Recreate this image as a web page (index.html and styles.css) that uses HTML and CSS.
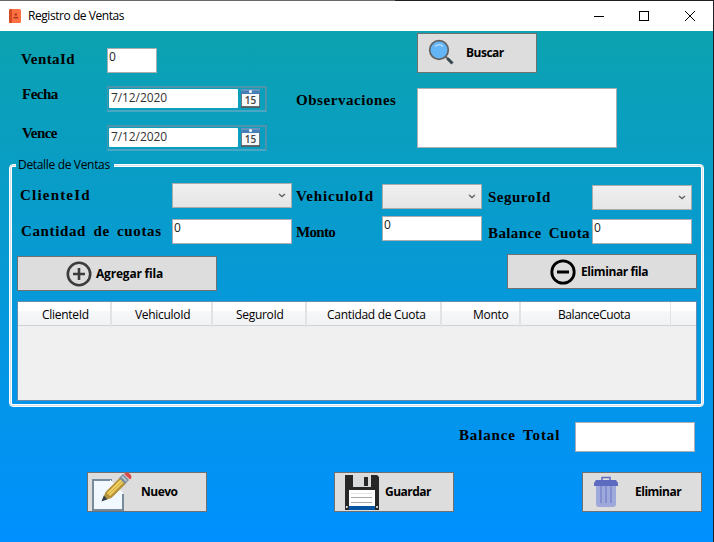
FILE: index.html
```html
<!DOCTYPE html>
<html lang="es">
<head>
<meta charset="utf-8">
<title>Registro de Ventas</title>
<link rel="stylesheet" href="styles.css">
</head>
<body>
<div class="window">
  <header class="titlebar">
    <svg class="app-icon" width="13" height="15" viewBox="0 0 13 15"><rect width="12" height="14" rx="1.5" fill="#ff7043"/><path d="M1.5 0H3v14H1.500Q0 14 0 12.500V1.500Q0 0 1.500 0z" fill="#d84a24"/><circle cx="6.800" cy="5.500" r="1.300" fill="#a9391d"/><path d="M4.300 9.500V8.700Q4.300 7.700 6.800 7.700T9.300 8.700v.8z" fill="#a9391d"/></svg>
    <span class="title">Registro de Ventas</span>
    <svg class="controls" width="104" height="12" viewBox="0 0 104 12" fill="none" stroke="#000" stroke-width="1"><path d="M0 6.500h10"/><rect x="45.500" y="1.500" width="9" height="9"/><path d="M91 1l10 10M101 1L91 11"/></svg>
  </header>

  <main>
    <section class="top">
      <div class="sale">
        <label class="lbl venta">VentaId</label><div class="input">0</div>
        <label class="lbl fecha">Fecha</label>
        <div class="date"><span>7/12/2020</span><svg width="19" height="19" viewBox="0 0 19 19"><rect x=".5" y=".5" width="18" height="17.500" fill="#f7f8f9" stroke="#6e7881"/><rect x="0" y="0" width="19" height="5" fill="#467eb5"/><path d="M0 1h19" stroke="#83a8c9"/><circle cx="9.500" cy="2.500" r="1.500" fill="#fff"/><path d="M0 18h19" stroke="#515253" stroke-width="1.500"/><text class="day" x="9.500" y="15.300" text-anchor="middle">15</text></svg></div>
        <label class="lbl vence">Vence</label>
        <div class="date"><span>7/12/2020</span><svg width="19" height="19" viewBox="0 0 19 19"><rect x=".5" y=".5" width="18" height="17.500" fill="#f7f8f9" stroke="#6e7881"/><rect x="0" y="0" width="19" height="5" fill="#467eb5"/><path d="M0 1h19" stroke="#83a8c9"/><circle cx="9.500" cy="2.500" r="1.500" fill="#fff"/><path d="M0 18h19" stroke="#515253" stroke-width="1.500"/><text class="day" x="9.500" y="15.300" text-anchor="middle">15</text></svg></div>
      </div>
      <label class="lbl obs">Observaciones</label>
      <div class="search">
        <div class="btn buscar">
          <svg width="28" height="28" viewBox="0 0 28 28"><path d="M17 17l3.500 3.500" stroke="#616161" stroke-width="2"/><path d="M19.500 19.500l5 5" stroke="#37474f" stroke-width="3"/><circle cx="11" cy="11" r="9.300" fill="#64b5f6" stroke="#616161" stroke-width="1.700"/><path d="M7 7.500Q11 3.800 15 7.500" fill="none" stroke="#bbdefb" stroke-width="1.300"/></svg>
          <span>Buscar</span>
        </div>
        <div class="input notes"></div>
      </div>
    </section>

    <section class="group">
      <h2 class="legend">Detalle de Ventas</h2>
      <div class="fields">
        <label class="lbl cliente">ClienteId</label>
        <div class="combo c1"><svg width="8" height="5" viewBox="0 0 8 5"><path d="M1 1l3 2.600L7 1" fill="none" stroke="#606060" stroke-width="1.300"/></svg></div>
        <label class="lbl vehiculo">VehiculoId</label>
        <div class="combo c2"><svg width="8" height="5" viewBox="0 0 8 5"><path d="M1 1l3 2.600L7 1" fill="none" stroke="#606060" stroke-width="1.300"/></svg></div>
        <label class="lbl seguro">SeguroId</label>
        <div class="combo c3"><svg width="8" height="5" viewBox="0 0 8 5"><path d="M1 1l3 2.600L7 1" fill="none" stroke="#606060" stroke-width="1.300"/></svg></div>
        <label class="lbl cuotas">Cantidad de cuotas</label><div class="input low">0</div>
        <label class="lbl monto">Monto</label><div class="input">0</div>
        <label class="lbl cuota">Balance Cuota</label><div class="input low">0</div>
      </div>
      <div class="row-actions">
        <div class="btn agregar">
          <svg width="26" height="26" viewBox="0 0 26 26" fill="none" stroke="#3c3c3c"><circle cx="13" cy="13" r="11.200" stroke-width="2.600"/><path d="M13 7v12M7 13h12" stroke-width="2.600"/></svg>
          <span>Agregar fila</span>
        </div>
        <div class="btn quitar">
          <svg width="26" height="26" viewBox="0 0 26 26" fill="none" stroke="#000"><circle cx="13" cy="13" r="11.200" stroke-width="2.800"/><path d="M7 13h12" stroke-width="3"/></svg>
          <span>Eliminar fila</span>
        </div>
      </div>
      <div class="grid">
        <div class="head"><span>ClienteId</span><span>VehiculoId</span><span>SeguroId</span><span>Cantidad de Cuota</span><span>Monto</span><span>BalanceCuota</span><span></span></div>
      </div>
    </section>

    <section class="total"><label class="lbl balance">Balance Total</label><div class="input"></div></section>

    <footer class="actions">
      <div class="btn nuevo">
        <svg width="42" height="42" viewBox="0 0 42 42"><path d="M20 9H3v30h30V22L20 9z" fill="#f1f8ff"/><path d="M22 9H3v30h30V23" fill="none" stroke="#788b9c" stroke-width="2"/><path d="M20 9L33 22" stroke="#f1f8ff" stroke-width="1"/><path d="M12 30l3.500-9L30 6.500l6 6L21.500 27z" fill="#b6913b"/><path d="M17 22L31.500 7.500l3 3L20 25z" fill="#f2d35f"/><path d="M18.500 23.500l14.500-14" stroke="#c7a043" stroke-width="1"/><path d="M11.500 30.500l2.300-6 3.700 3.700z" fill="#36404d"/><path d="M29 7l4-4 6 6-4 4z" fill="#788b9c"/><path d="M32 5.500l4.500 4.500" stroke="#b6c4d0" stroke-width="2"/><path d="M34 3q3-3 6 0t0 5.500z" fill="#d94b4b"/></svg>
        <span>Nuevo</span>
      </div>
      <div class="btn guardar">
        <svg width="34" height="35" viewBox="0 0 34 35"><path d="M0 0h32l2 2v33H0z" fill="#272727"/><path d="M8 0h18v12H8z" fill="#d9dadb"/><rect x="19" y="2" width="4" height="9" fill="#272727"/><path d="M4 15h26v16H4z" fill="#fff"/><path d="M4 31h26v4H4z" fill="#0755a0"/><path d="M6 22.500h21M6 27.500h21" stroke="#a8a8a8"/><path d="M6 18.500h21" stroke="#e5e5e5"/><circle cx="1.800" cy="32" r="1" fill="#fff"/><circle cx="32" cy="32" r="1" fill="#fff"/></svg>
        <span>Guardar</span>
      </div>
      <div class="btn eliminar">
        <svg width="24" height="32" viewBox="0 0 24 32"><path d="M8 4V1.500h8V4" fill="none" stroke="#5c6bc0" stroke-width="1.500"/><path d="M2 9h20v19q0 3-3 3H5q-3 0-3-3z" fill="#9fa8da"/><path d="M2 4h20l2 3v3H0V7z" fill="#5c6bc0"/><path d="M7 10v17M12 10v17M17 10v17" stroke="#7986cb" stroke-width="1.500"/></svg>
        <span>Eliminar</span>
      </div>
    </footer>
  </main>
</div>
</body>
</html>
```
FILE: styles.css
```css
* { box-sizing: border-box; }

body {
  margin: 0;
  width: 714px;
  height: 542px;
  overflow: hidden;
  background: linear-gradient(90deg, #6b6868 395px, #202024 395px);
  font: 12px/16px "Open Sans", "Noto Sans", sans-serif;
  color: #000;
}

svg { display: block; flex: none; }

.window { width: 713px; padding-top: 1px; }

.titlebar {
  display: flex;
  align-items: center;
  height: 30px;
  padding: 0 14px 0 9px;
  background: #fff;
}
.title { margin-left: 6px; letter-spacing: -0.45px; white-space: nowrap; }
.controls { margin-left: auto; margin-right: 1px; }

main {
  height: 511px;
  background: linear-gradient(#0ca2b0, #0090ff);
}

.lbl {
  font: bold 15px/16px "Liberation Serif", serif;
  white-space: nowrap;
}

.input {
  height: 25px;
  padding: 0 1px;
  border: 1px solid #abadb3;
  background: #fff;
  color: #222;
}

.btn {
  display: flex;
  align-items: center;
  border: 1px solid #707070;
  background: #ddd;
  font-weight: bold;
  letter-spacing: -0.5px;
  white-space: nowrap;
}

/* Sale header */
.top { display: flex; height: 133px; }
.sale {
  display: grid;
  grid-template-columns: 107px 160px;
  grid-template-rows: 38px 39px 26px;
  width: 296px;
  padding-top: 17px;
}
.sale .input { width: 50px; }
.venta { padding: 3px 0 0 21px; letter-spacing: 0.4px; }
.fecha { padding: 0 0 0 22px; letter-spacing: -0.5px; }
.vence { padding: 0 0 0 22px; letter-spacing: -0.6px; }
.obs { width: 121px; padding-top: 61px; letter-spacing: 0.55px; }

.date {
  display: flex;
  justify-content: space-between;
  height: 26px;
  padding: 1px 5px 0 1px;
  border: 2px solid #4d93aa;
  border-left-width: 1px;
  border-bottom-color: #4aa6c3;
}
.date span {
  width: 129px;
  height: 19px;
  padding-left: 2px;
  border-radius: 1px;
  background: #fff;
  color: #333;
  line-height: 18px;
  letter-spacing: -0.1px;
}
.day { font: 600 10px "Open Sans", sans-serif; fill: #444; }

.search { padding-top: 2px; }
.buscar { width: 120px; height: 40px; padding-left: 10px; gap: 10px; }
.notes { width: 200px; height: 60px; margin-top: 15px; }

/* Detail group */
.group {
  width: 695px;
  height: 243px;
  margin-left: 9px;
  padding: 1px 6px 0 8px;
  border: 1px solid #fff;
  border-radius: 4px;
  box-shadow: inset 0 0 0 1px #d5dfe5, inset 0 0 0 2px #fff;
}
.legend {
  width: 98px;
  height: 16px;
  margin: -9px 0 0 -2px;
  padding-left: 2px;
  background: #099dc5;
  font-size: 12px;
  font-weight: normal;
  letter-spacing: -0.33px;
  white-space: nowrap;
}
.fields {
  display: grid;
  grid-template-columns: 154px 120px 90px 100px 110px 100px;
  grid-template-rows: 33px 28px;
  margin-top: 10px;
}
.combo {
  display: flex;
  align-items: center;
  justify-content: flex-end;
  height: 25px;
  padding-right: 5px;
  border: 1px solid #acacac;
  background: linear-gradient(#f0f0f0, #e5e5e5);
}
.c2 { margin-top: 1px; }
.c3 { margin-top: 2px; }
.low { margin-top: 3px; }
.cliente { padding: 4px 0 0 2px; letter-spacing: 1.2px; }
.vehiculo { padding: 5px 0 0 4px; letter-spacing: 0.85px; }
.seguro { padding: 6px 0 0 6px; letter-spacing: 0.5px; }
.cuotas { padding: 7px 0 0 3px; letter-spacing: 0.63px; word-spacing: 3px; }
.monto { padding: 8px 0 0 4px; letter-spacing: -0.7px; }
.cuota { padding: 9px 0 0 6px; letter-spacing: 0.4px; word-spacing: 3px; }

.row-actions {
  display: flex;
  justify-content: space-between;
  margin: 10px 0 0 -1px;
}
.row-actions .btn { height: 35px; }
.agregar { width: 200px; margin-top: 2px; padding-left: 48px; gap: 4px; letter-spacing: -0.2px; }
.quitar { width: 190px; padding-left: 42px; gap: 5px; letter-spacing: -0.4px; }

.grid {
  height: 100px;
  margin: 10px 0 0 -1px;
  border: 1px solid #688caf;
  background: #f0f0f0;
}
.head {
  display: grid;
  grid-template-columns: 94px 101px 94px 135px 79px 150px 1fr;
  height: 24px;
  border-bottom: 1px solid #d0d2d5;
  background: linear-gradient(#fff 40%, #f7f8fa 40%, #f1f2f4);
  line-height: 25px;
  letter-spacing: -0.3px;
  white-space: nowrap;
}
.head span { border-right: 2px solid #e2e3e5; padding-left: 23px; }
.head span:nth-child(1) { padding-left: 24px; }
.head span:nth-child(4) { padding-left: 20px; }
.head span:nth-child(5) { padding-left: 31px; }
.head span:nth-child(6) { padding-left: 37px; border-right-width: 1px; letter-spacing: -0.4px; }
.head span:last-child { border: 0; }

/* Total and main actions */
.total { display: flex; justify-content: flex-end; padding: 15px 18px 0 0; }
.total .input { width: 120px; height: 30px; }
.balance { width: 116px; padding-top: 5px; letter-spacing: 0.85px; word-spacing: 3px; }

.actions {
  display: flex;
  padding: 20px 11px 0 87px;
}
.actions .btn { width: 120px; height: 40px; }
.nuevo { padding-left: 2px; gap: 9px; }
.guardar { margin-left: 127px; padding-left: 10px; gap: 6px; }
.eliminar { margin-left: 128px; padding-left: 11px; gap: 17px; }
```
